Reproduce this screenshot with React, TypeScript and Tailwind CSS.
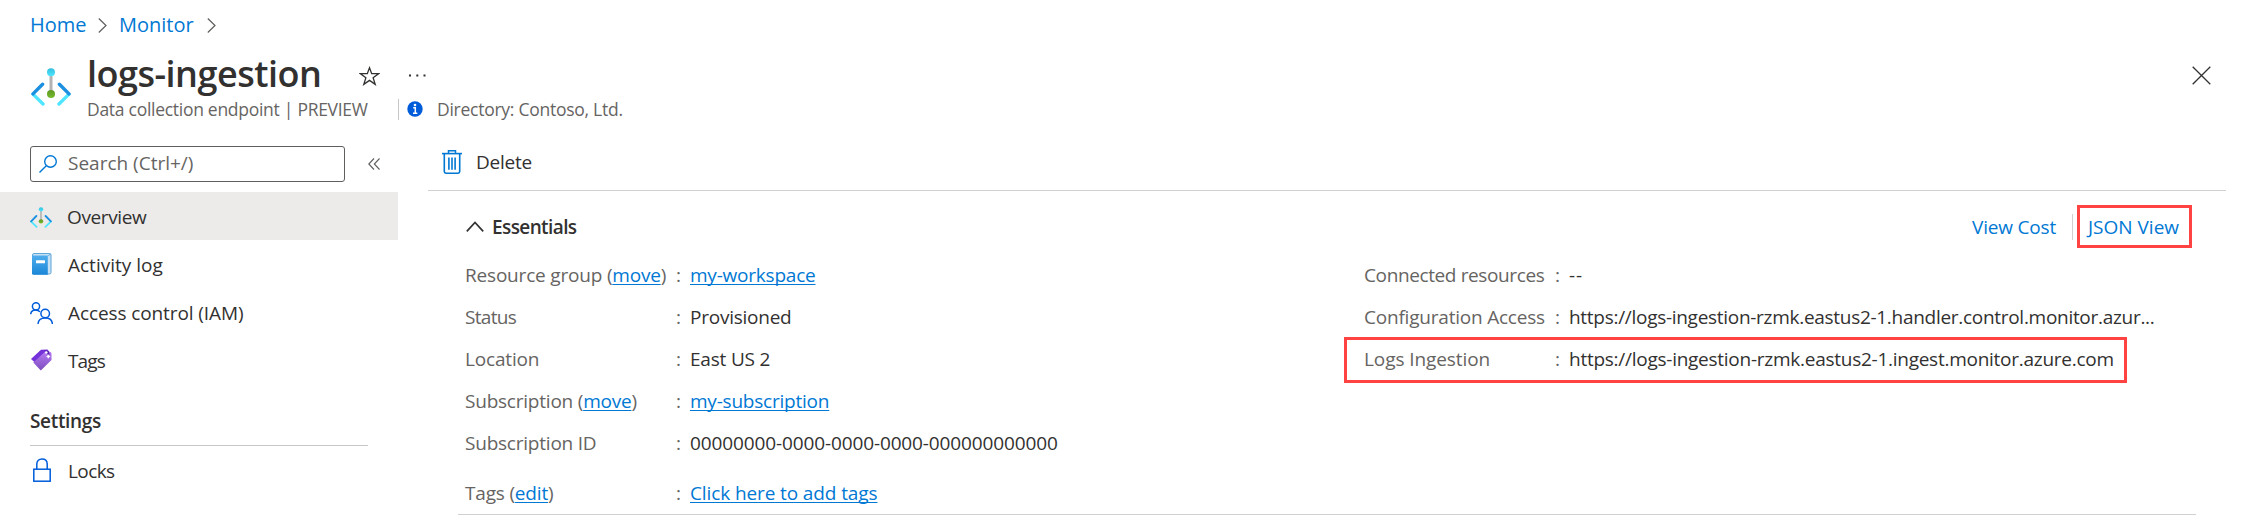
import React from 'react';

type IconProps = { className?: string };

function EndpointIcon({ className }: IconProps) {
  return (
    <svg viewBox="0 0 40 38" className={className} fill="none">
      <defs>
        <linearGradient id="stem-top" x1="0" y1="0" x2="0" y2="1">
          <stop offset="0" stopColor="#32bedd" />
          <stop offset="1" stopColor="#50e6ff" />
        </linearGradient>
        <linearGradient id="stem-bottom" x1="0" y1="0" x2="0" y2="1">
          <stop offset="0" stopColor="#5e9624" />
          <stop offset="1" stopColor="#76bc2d" />
        </linearGradient>
      </defs>
      <path d="M2.200 26.400L12 36" stroke="#50e6ff" strokeWidth="3.400" strokeLinecap="round" />
      <path d="M2 25.900L11.600 16.300" stroke="#1b8fe0" strokeWidth="3.400" strokeLinecap="round" />
      <path d="M37.800 26.400L28 36" stroke="#50e6ff" strokeWidth="3.400" strokeLinecap="round" />
      <path d="M28.400 16.300L38 25.900" stroke="#1b8fe0" strokeWidth="3.400" strokeLinecap="round" />
      <path d="M20 6V24" stroke="#b3b3b3" strokeWidth="3" />
      <circle cx="20" cy="4.200" r="4" fill="url(#stem-top)" />
      <circle cx="20" cy="26" r="4" fill="url(#stem-bottom)" />
    </svg>
  );
}

function LogIcon({ className }: IconProps) {
  return (
    <svg viewBox="0 0 20 22" className={className}>
      <defs>
        <linearGradient id="book" x1="0" y1="0" x2="0" y2="1">
          <stop offset="0" stopColor="#4fadec" />
          <stop offset="1" stopColor="#1b87d8" />
        </linearGradient>
      </defs>
      <rect x="0.500" y="0.500" width="18.500" height="20.500" rx="1.500" fill="#c6e0f4" stroke="#5fa6d8" />
      <path d="M0 2.500H15.800V21.800H1.500A1.500 1.500 0 0 1 0 20.300Z" fill="url(#book)" />
      <path d="M16.300 2.700L18.600 0.800" stroke="#5fa6d8" />
      <rect x="4" y="7.300" width="9" height="3" rx="0.500" fill="#fff" />
    </svg>
  );
}

function PeopleIcon({ className }: IconProps) {
  return (
    <svg viewBox="0 0 23 22" className={className} fill="none" stroke="#015cda" strokeWidth="1.500">
      <circle cx="6" cy="4.300" r="3.600" />
      <path d="M0.700 12.300C0.900 9.400 3 7.900 5.600 7.900C7.500 7.900 9 8.600 10 9.900" />
      <circle cx="15.200" cy="11.500" r="4.300" />
      <path d="M8 22C8.200 18.300 11 15.900 15.200 15.900C19.400 15.900 22.200 18.300 22.400 22" />
    </svg>
  );
}

function TagIcon({ className }: IconProps) {
  return (
    <svg viewBox="0 0 21 22" className={className}>
      <defs>
        <linearGradient id="tag" x1="0" y1="0" x2="0" y2="1">
          <stop offset="0" stopColor="#b77af4" />
          <stop offset="1" stopColor="#7c4dbd" />
        </linearGradient>
      </defs>
      <path d="M10 0.800L16.500 0.500L18.500 3L4 13.500L0 10Z" fill="#7430d9" />
      <path d="M14.500 2.200L19.500 3Q20.500 3.500 20.500 5V11L9.800 21.500L2.300 13.600Z" fill="url(#tag)" />
      <path d="M13.500 1L18 2.600L18.600 6L15.500 4.800Z" fill="#5a1fae" />
      <circle cx="15.300" cy="3.500" r="1.300" fill="#fff" />
      <circle cx="17.300" cy="7.500" r="1.300" fill="#fff" />
      <path d="M15.500 7.500H19.200M17.300 5.700V9.400" stroke="#fff" strokeWidth="0.900" />
    </svg>
  );
}

function LockIcon({ className }: IconProps) {
  return (
    <svg viewBox="0 0 18 24" className={className} fill="none" stroke="#015cda" strokeWidth="1.500">
      <rect x="0.800" y="11.200" width="16.400" height="12" />
      <path d="M3.800 11V6C3.800 2.800 6 0.900 9 0.900S14.200 2.800 14.200 6V11" />
    </svg>
  );
}

function TrashIcon({ className }: IconProps) {
  return (
    <svg viewBox="0 0 20 24" className={className} fill="none" stroke="#0078d4">
      <path d="M0 3.600H20" strokeWidth="1.600" />
      <path d="M6.500 3.500V0.800H13.500V3.500" strokeWidth="1.500" />
      <path d="M2.300 4V21.600Q2.300 23.200 3.900 23.200H16.100Q17.700 23.200 17.700 21.600V4" strokeWidth="1.600" />
      <path d="M6.900 7.500V19.800M10 7.500V19.800M13.100 7.500V19.800" strokeWidth="1.600" />
    </svg>
  );
}

function Chevron() {
  return (
    <svg viewBox="0 0 9 15" className="h-[15px] w-[9px]" fill="none" stroke="#605e5c" strokeWidth="1.200">
      <path d="M0.800 0.500L8 7.500L0.800 14.500" />
    </svg>
  );
}

function Link({ children }: { children: React.ReactNode }) {
  return <a className="text-[#0078d4] underline decoration-1 underline-offset-2 [text-decoration-skip-ink:none]">{children}</a>;
}

function Row({ label, spacing = '', children, wide = false, tall = false }: {
  label: React.ReactNode;
  spacing?: string;
  children: React.ReactNode;
  wide?: boolean;
  tall?: boolean;
}) {
  return (
    <div className={`flex items-center whitespace-nowrap ${tall ? 'h-[50px] pt-2' : 'h-[42px]'}`}>
      <span className={`text-[#666462] ${spacing} ${wide ? 'w-[191px]' : 'w-[211px]'}`}>{label}</span>
      <span className="w-[14px] text-[#666462]">:</span>
      {children}
    </div>
  );
}

function NavItem({ icon, label, active = false }: { icon: React.ReactNode; label: React.ReactNode; active?: boolean }) {
  return (
    <div className={`flex h-12 items-center pl-[30px] ${active ? 'bg-[#edebe9]' : ''}`}>
      <span className="flex w-[37px] items-center">{icon}</span>
      <span className="pt-[2px]">{label}</span>
    </div>
  );
}

export default function App() {
  return (
    <div className="flex h-[520px] w-[2254px] flex-col overflow-hidden bg-white font-['Open_Sans',sans-serif] text-[19px] text-[#323130]">
      <nav className="flex h-[50px] items-center pl-[30px] text-[20px] text-[#0078d4]">
        <span className="w-[68px]">Home</span>
        <Chevron />
        <span className="ml-[12px] w-[88px]">Monitor</span>
        <Chevron />
      </nav>

      <header className="flex h-[83px] justify-between pr-[43px]">
        <div className="flex pl-[31px]">
          <EndpointIcon className="mt-[18px] h-[38px] w-[40px]" />
          <div className="ml-[16px] flex flex-col">
            <div className="flex h-[46px] items-center">
              <h1 className="w-[272px] pt-[2px] text-[36px] leading-[46px] font-semibold tracking-[-0.5px]">logs-ingestion</h1>
              <svg viewBox="0 0 21 20" className="mt-[6px] h-5 w-[21px]" fill="none" stroke="#323130" strokeWidth="1.300">
                <path d="M10.500 1.800L12.700 7.700H19.500L14.100 11.800L16.200 18.400L10.500 14.400L4.800 18.400L6.900 11.800L1.500 7.700H8.300Z" />
              </svg>
              <svg viewBox="0 0 17 3" className="mt-[4px] ml-[29px] h-[3px] w-[17px]" fill="#323130">
                <rect x="0" y="0.500" width="2" height="2" />
                <rect x="7.300" y="0.500" width="2" height="2" />
                <rect x="14.500" y="0.500" width="2" height="2" />
              </svg>
            </div>
            <div className="flex h-[26px] items-center text-[17.5px] text-[#666462]">
              <span className="w-[311px] pt-px tracking-[-0.28px]">Data collection endpoint | PREVIEW</span>
              <span className="h-[21px] w-px bg-[#c8c6c4]" />
              <svg viewBox="0 0 16 16" className="ml-2 h-4 w-4">
                <circle cx="8" cy="8" r="7.700" fill="#015cda" />
                <circle cx="8" cy="4" r="1.300" fill="#fff" />
                <path d="M6.200 6.800H8.300V12.300M6 12.300H10.300" stroke="#fff" strokeWidth="1.500" fill="none" />
              </svg>
              <span className="ml-[14px] pt-px tracking-[-0.26px]">Directory: Contoso, Ltd.</span>
            </div>
          </div>
        </div>
        <svg viewBox="0 0 19 19" className="mt-[16px] h-[19px] w-[19px]" fill="none" stroke="#323130" strokeWidth="1.300">
          <path d="M0.700 0.700L18.300 18.300M18.300 0.700L0.700 18.300" />
        </svg>
      </header>

      <div className="flex flex-1">
        <aside className="w-[398px] shrink-0 pt-[13px]">
          <div className="mb-[10px] flex items-center pl-[30px]">
            <div className="flex h-9 w-[315px] items-center rounded-[3px] border border-[#605e5c] pl-[8px]">
              <svg viewBox="0 0 18 18" className="h-[18px] w-[18px]" fill="none" stroke="#0078d4" strokeWidth="1.400">
                <circle cx="11.500" cy="6.500" r="5.800" />
                <path d="M7.300 10.700L0.500 17.500" />
              </svg>
              <span className="ml-[11px] pb-[2px] text-[#666462]">Search (Ctrl+/)</span>
            </div>
            <svg viewBox="0 0 12 12" className="ml-[23px] h-3 w-3" fill="none" stroke="#605e5c" strokeWidth="1.100">
              <path d="M6 0.500L0.800 6L6 11.500M11.500 0.500L6.300 6L11.500 11.500" />
            </svg>
          </div>
          <NavItem active icon={<EndpointIcon className="mt-[2px] h-[21px] w-[22px]" />} label={<span className="tracking-[-0.38px]">Overview</span>} />
          <NavItem icon={<LogIcon className="ml-[2px] h-[22px] w-[20px]" />} label={<span className="ml-px">Activity log</span>} />
          <NavItem icon={<PeopleIcon className="mt-[2px] h-[22px] w-[23px]" />} label={<span className="ml-px tracking-[-0.1px]">Access control (IAM)</span>} />
          <NavItem icon={<TagIcon className="ml-[1px] h-[22px] w-[21px]" />} label={<span className="ml-px tracking-[-0.9px]">Tags</span>} />
          <div className="mx-[30px] flex h-[62px] items-end border-b border-[#c8c6c4] pb-[10px] font-semibold tracking-[-0.33px]">Settings</div>
          <NavItem icon={<LockIcon className="ml-[3px] h-6 w-[18px]" />} label={<span className="ml-px tracking-[-0.6px]">Locks</span>} />
        </aside>

        <main className="flex flex-1 flex-col pl-[30px]">
          <div className="mr-7 flex h-[58px] items-center border-b border-[#d2d0ce] pl-[14px]">
            <TrashIcon className="h-6 w-5" />
            <span className="ml-[14px] pt-[2px] tracking-[-0.24px]">Delete</span>
          </div>
          <section className="mr-[58px] ml-[30px] flex h-[324px] flex-col border-b border-[#d2d0ce] pl-[7px]">
            <div className="flex h-[63px] shrink-0 items-center justify-between pt-[9px]">
              <div className="flex items-center pl-px font-semibold">
                <svg viewBox="0 0 18 11" className="mt-[-2px] h-[11px] w-[18px]" fill="none" stroke="#323130" strokeWidth="1.700">
                  <path d="M0.800 10.300L9 1.500L17.200 10.300" />
                </svg>
                <span className="ml-[8px] tracking-[-0.6px]">Essentials</span>
              </div>
              <div className="relative flex items-center pr-[15px] text-[#0078d4]">
                <span className="w-[100px] pt-px tracking-[-0.18px]">View Cost</span>
                <span className="h-[26px] w-px bg-[#d2d0ce]" />
                <span className="ml-[15px] w-[93px] pt-px whitespace-nowrap">JSON View</span>
                <span className="absolute -top-[7px] right-[4px] h-[43px] w-[115px] border-[3px] border-[#ff4343]" />
              </div>
            </div>
            <div className="flex">
              <div className="w-[899px]">
                <Row spacing="tracking-[-0.19px]" label={<>Resource group (<Link>move</Link>)</>}>
                  <span className="tracking-[-0.22px]"><Link>my-workspace</Link></span>
                </Row>
                <Row spacing="tracking-[-0.7px]" label="Status"><span className="tracking-[-0.24px]">Provisioned</span></Row>
                <Row spacing="tracking-[-0.17px]" label="Location"><span className="tracking-[-0.2px]">East US 2</span></Row>
                <Row spacing="tracking-[-0.22px]" label={<>Subscription (<Link>move</Link>)</>}>
                  <span className="tracking-[-0.22px]"><Link>my-subscription</Link></span>
                </Row>
                <Row spacing="tracking-[-0.22px]" label="Subscription ID">
                  <span className="tracking-[-0.12px]">00000000-0000-0000-0000-000000000000</span>
                </Row>
                <Row tall spacing="tracking-[-0.18px]" label={<>Tags (<Link>edit</Link>)</>}>
                  <span className="tracking-[-0.11px]"><Link>Click here to add tags</Link></span>
                </Row>
              </div>
              <div>
                <Row wide spacing="tracking-[-0.38px]" label="Connected resources"><span className="tracking-[1px]">--</span></Row>
                <Row wide spacing="tracking-[-0.21px]" label="Configuration Access">
                  <span className="tracking-[-0.29px]">https://logs-ingestion-rzmk.eastus2-1.handler.control.monitor.azur...</span>
                </Row>
                <div className="relative">
                  <span className="absolute -top-[1px] -left-[20px] h-[46px] w-[783px] border-[3px] border-[#ff4343]" />
                  <Row wide spacing="tracking-[-0.09px]" label="Logs Ingestion">
                    <span className="tracking-[-0.26px]">https://logs-ingestion-rzmk.eastus2-1.ingest.monitor.azure.com</span>
                  </Row>
                </div>
              </div>
            </div>
          </section>
        </main>
      </div>
    </div>
  );
}
